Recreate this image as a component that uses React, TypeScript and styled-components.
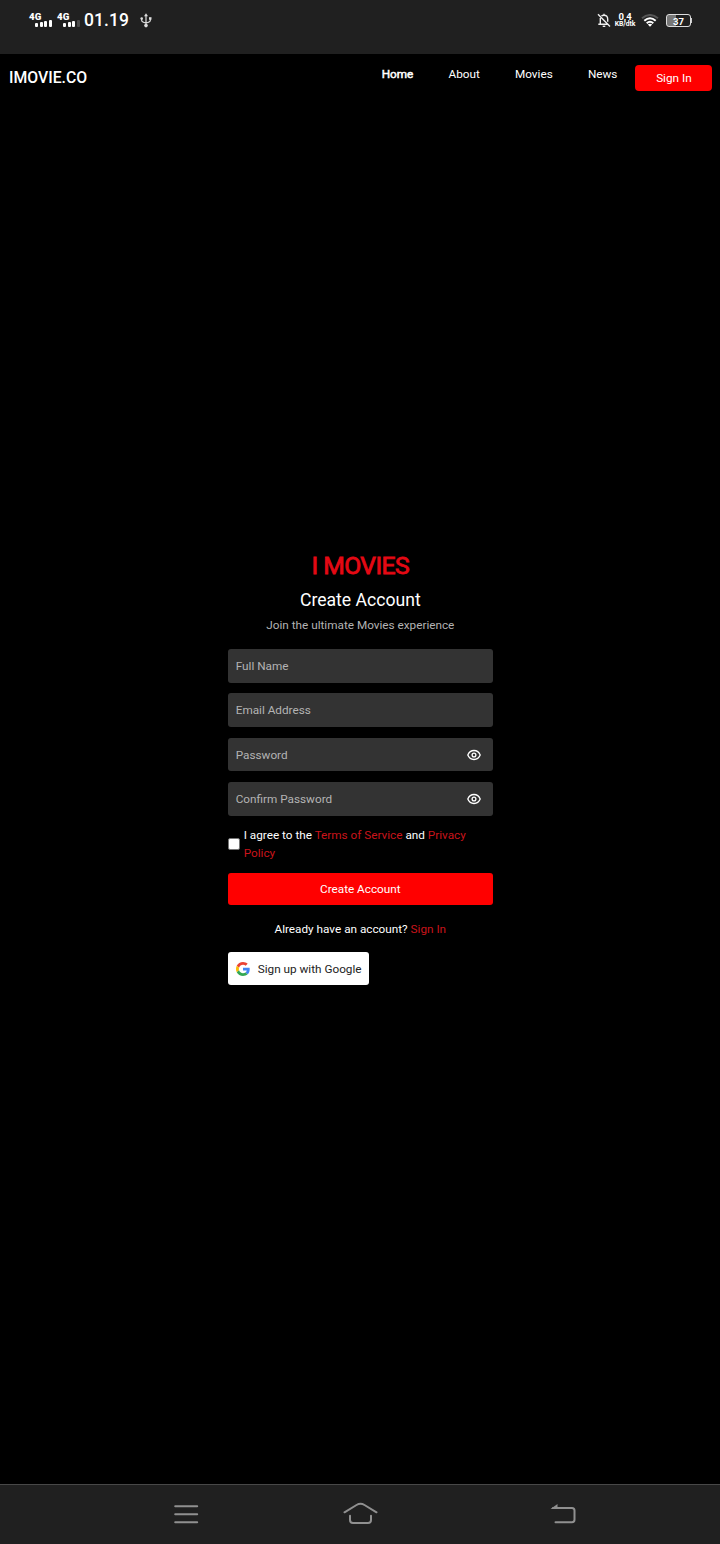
import React from 'react';
import styled, { createGlobalStyle } from 'styled-components';

const Global = createGlobalStyle`
  * { box-sizing: border-box; }
  html, body { margin: 0; background: #000; }
  body, input, button { font-family: Roboto, "Liberation Sans", sans-serif; }
`;

const Screen = styled.div`
  width: 720px;
  height: 1544px;
  display: flex;
  flex-direction: column;
  background: #000;
  color: #fff;
  font-size: 11.75px;
  overflow: hidden;
`;

const StatusBar = styled.header`
  height: 54px;
  flex: none;
  background: #202020;
  display: flex;
  justify-content: space-between;
  align-items: flex-start;
  padding: 10px 28px 0 28px;
`;

const StatusGroup = styled.div`
  display: flex;
  align-items: center;
  height: 20px;
`;

const Signal = styled.div`
  width: 28px;
  height: 16px;
  display: flex;
  flex-direction: column;
`;

const SignalLabel = styled.span`
  font-size: 9.7px;
  line-height: 9px;
  font-weight: 900;
  letter-spacing: 0.2px;
  padding-left: 1px;
`;

const Bars = styled.div`
  display: flex;
  align-items: flex-end;
  gap: 1.5px;
  height: 8px;
  margin-top: -2.5px;
  padding-left: 7px;
`;

const Bar = styled.i<{ $h: number; $dim?: boolean }>`
  width: 3px;
  height: ${(p) => p.$h}px;
  border-radius: 1px;
  background: ${(p) => (p.$dim ? '#4a4a4a' : '#fff')};
`;

const Clock = styled.span`
  font-size: 17.5px;
  line-height: 20px;
  font-weight: 500;
  letter-spacing: 0.1px;
  width: 56px;
`;

const Speed = styled.div`
  width: 22px;
  margin: 0 5px 0 3px;
  display: flex;
  flex-direction: column;
  align-items: center;
  font-weight: 700;
`;

const SpeedValue = styled.span`
  font-size: 9.5px;
  line-height: 8px;
`;

const SpeedUnit = styled.span`
  font-size: 6.8px;
  line-height: 6px;
  letter-spacing: -0.1px;
  white-space: nowrap;
`;

const Battery = styled.div`
  width: 25px;
  height: 13px;
  margin-left: 7px;
  border: 1px solid #ddd;
  border-radius: 3px;
  background: linear-gradient(90deg, #777 0 38%, #202020 38%);
  font-size: 9.5px;
  line-height: 14px;
  font-weight: 700;
  text-align: center;
`;

const BatteryTip = styled.i`
  width: 1px;
  height: 5px;
  background: #ccc;
`;

const NavBar = styled.nav`
  height: 48px;
  flex: none;
  display: flex;
  align-items: flex-start;
  padding: 11.3px 7.6px 0 9px;
`;

const Brand = styled.div`
  font-size: 15.8px;
  line-height: 25px;
  font-weight: 500;
  margin-right: auto;
`;

const NavLinks = styled.div`
  display: flex;
  gap: 35.2px;
  margin-right: 18px;
  line-height: 18px;
`;

const NavLink = styled.a<{ $active?: boolean }>`
  -webkit-text-stroke: ${(p) => (p.$active ? '0.5px #fff' : '0')};
`;

const SignInButton = styled.button`
  width: 77px;
  height: 26px;
  padding: 0;
  border: 0;
  border-radius: 4px;
  background: #f00;
  color: #fff;
  font-size: 11.75px;
`;

const Main = styled.main`
  flex: 1;
  display: flex;
  flex-direction: column;
  align-items: center;
  padding: 449px 0 0 0.6px;
`;

const Form = styled.form`
  width: 265.2px;
  display: flex;
  flex-direction: column;
`;

const Logo = styled.h1`
  margin: 0;
  font-size: 24.7px;
  line-height: 30px;
  font-weight: 400;
  letter-spacing: -0.6px;
  text-align: center;
  color: #e50914;
  -webkit-text-stroke: 0.8px #e50914;
`;

const Title = styled.h2`
  margin: 7px 0 0;
  font-size: 17.6px;
  line-height: 24px;
  font-weight: 400;
  text-align: center;
`;

const Subtitle = styled.p`
  margin: 4px 0 15px;
  line-height: 18px;
  text-align: center;
  color: #b3b3b3;
`;

const Field = styled.label`
  height: 33.5px;
  margin-bottom: 10.9px;
  padding: 0 12px 0 8px;
  display: flex;
  align-items: center;
  border-radius: 3px;
  background: #333;
`;

const Input = styled.input`
  flex: 1;
  min-width: 0;
  padding: 0;
  border: 0;
  outline: 0;
  background: transparent;
  color: #fff;
  font-size: 11.75px;
  &::placeholder { color: #b3b3b3; opacity: 1; }
`;

const Agreement = styled.label`
  display: flex;
  align-items: center;
  line-height: 18px;
  margin: -0.7px 0 11.2px;
`;

const Checkbox = styled.input`
  appearance: none;
  flex: none;
  width: 12px;
  height: 12px;
  margin: 0 4px 0 0;
  border: 1px solid #767676;
  border-radius: 2px;
  background: #fff;
`;

const RedLink = styled.a`
  color: #c9141b;
`;

const Submit = styled.button`
  height: 32.3px;
  padding: 0;
  border: 0;
  border-radius: 3px;
  background: #f00;
  color: #fff;
  font-size: 11.75px;
`;

const Already = styled.p`
  margin: 14.2px 0 14.8px;
  line-height: 18px;
  text-align: center;
`;

const GoogleButton = styled.button`
  align-self: flex-start;
  width: 141px;
  height: 32.5px;
  padding: 0 0 0 8px;
  display: flex;
  align-items: center;
  gap: 8px;
  border: 0;
  border-radius: 3px;
  background: #fff;
  color: #222;
  font-size: 11.75px;
  white-space: nowrap;
`;

const SystemNav = styled.footer`
  height: 60px;
  flex: none;
  border-top: 1px solid #484848;
  background: #202020;
  display: grid;
  grid-template-columns: 169px 208px 26px;
  align-items: center;
  padding: 0 0 2px 173px;
`;

const EyeIcon = () => (
  <svg width="14" height="12" viewBox="0 0 14 12" fill="none" stroke="#fff" strokeWidth="1.3">
    <path d="M.8 6C2 3 4.2 1.5 7 1.5S12 3 13.2 6C12 9 9.800 10.500 7 10.500S2 9 .8 6Z" />
    <circle cx="7" cy="6" r="1.900" />
  </svg>
);

const UsbIcon = () => (
  <svg width="12" height="15" viewBox="0 0 12 15" fill="none" stroke="#ddd" strokeWidth="1.2">
    <path d="M6 2v10M1.700 5.500v2Q1.700 9 6 10M10.300 5.500v2Q10.300 9 6 10" />
    <path d="M6 .3 8 3.300H4Z" fill="#ddd" stroke="none" />
    <circle cx="1.700" cy="5.500" r="1.300" fill="#ddd" stroke="none" />
    <path d="M9 4.200h2.500v2.500H9Z" fill="#ddd" stroke="none" />
    <circle cx="6" cy="12.600" r="1.800" fill="#ddd" stroke="none" />
  </svg>
);

const BellOffIcon = () => (
  <svg width="14" height="15" viewBox="0 0 14 15" fill="none" stroke="#eee" strokeWidth="1.400">
    <path d="M4.500 3.100C5 2.600 6 2.300 7 2.300c2.200 0 3.700 1.700 3.700 4v2.500M3.300 5v5.800M1.300 11.200h9M7 2.300V.7M1 1.200l12 12.300" />
    <path d="M5.700 13.300h2.600" />
  </svg>
);

const WifiIcon = () => (
  <svg width="18" height="13" viewBox="0 0 18 13" fill="none" strokeWidth="2">
    <path d="M1 4.300Q9-2.300 17 4.300" stroke="#555" />
    <path d="M3.300 6.700Q9 1.700 14.700 6.700M5.700 9.200Q9 6.200 12.300 9.200" stroke="#fff" />
    <path d="M6.800 10.400Q9 8.900 11.200 10.400L9 12.800Z" fill="#fff" />
  </svg>
);

const GoogleIcon = () => (
  <svg width="14" height="14" viewBox="0 0 48 48">
    <path fill="#EA4335" d="M24 9.500c3.540 0 6.710 1.220 9.210 3.600l6.850-6.850C35.900 2.380 30.470 0 24 0 14.620 0 6.510 5.380 2.560 13.220l7.980 6.190C12.430 13.720 17.740 9.500 24 9.500z" />
    <path fill="#4285F4" d="M46.980 24.550c0-1.570-.15-3.090-.38-4.550H24v9.020h12.940c-.58 2.960-2.260 5.480-4.780 7.180l7.730 6c4.510-4.180 7.090-10.360 7.090-17.650z" />
    <path fill="#FBBC05" d="M10.530 28.590A14.500 14.500 0 0 1 9.770 24c0-1.600.27-3.140.76-4.590l-7.980-6.190A23.900 23.900 0 0 0 0 24c0 3.870.92 7.540 2.560 10.780l7.970-6.190z" />
    <path fill="#34A853" d="M24 48c6.480 0 11.930-2.130 15.890-5.810l-7.730-6c-2.150 1.450-4.920 2.300-8.160 2.300-6.260 0-11.570-4.220-13.470-9.910l-7.980 6.190C6.510 42.620 14.620 48 24 48z" />
  </svg>
);

const RecentsIcon = () => (
  <svg width="26" height="22" viewBox="0 0 26 22" stroke="#909090" strokeWidth="2" strokeLinecap="round">
    <path d="M2.200 3.300h22M2.200 11.300h22M2.200 19.300h22" />
  </svg>
);

const HomeIcon = () => (
  <svg width="36" height="24" viewBox="0 0 36 24" fill="none" stroke="#909090" strokeWidth="2" strokeLinecap="round">
    <path d="M2.500 10.300 14.500 3Q18.500 .7 22.500 3L34.500 10.300M8 13.800V18Q8 21 11 21H26Q29 21 29 18V13.800" />
  </svg>
);

const BackIcon = () => (
  <svg width="26" height="22" viewBox="0 0 26 22" fill="none" stroke="#909090" strokeWidth="2">
    <path d="M3 5H22Q24.500 5 24.500 7.500V16.500Q24.500 19.300 22 19.300H5.500" strokeLinecap="round" />
    <path d="M.5 6 7.500 1V6Z" fill="#909090" stroke="none" />
  </svg>
);

const bars = [4, 4.5, 5.5, 7];

const CellSignal = ({ weak }: { weak?: boolean }) => (
  <Signal>
    <SignalLabel>4G</SignalLabel>
    <Bars>
      {bars.map((h, i) => (
        <Bar key={h} $h={h} $dim={weak && i === 3} />
      ))}
    </Bars>
  </Signal>
);

const fields = [
  { label: 'Full Name', type: 'text' },
  { label: 'Email Address', type: 'email' },
  { label: 'Password', type: 'password' },
  { label: 'Confirm Password', type: 'password' },
];

export default function App() {
  return (
    <>
      <Global />
      <Screen>
        <StatusBar>
          <StatusGroup>
            <CellSignal />
            <CellSignal weak />
            <Clock>01.19</Clock>
            <UsbIcon />
          </StatusGroup>
          <StatusGroup>
            <BellOffIcon />
            <Speed>
              <SpeedValue>0,4</SpeedValue>
              <SpeedUnit>KB/dtk</SpeedUnit>
            </Speed>
            <WifiIcon />
            <Battery>37</Battery>
            <BatteryTip />
          </StatusGroup>
        </StatusBar>
        <NavBar>
          <Brand>IMOVIE.CO</Brand>
          <NavLinks>
            <NavLink $active>Home</NavLink>
            <NavLink>About</NavLink>
            <NavLink>Movies</NavLink>
            <NavLink>News</NavLink>
          </NavLinks>
          <SignInButton>Sign In</SignInButton>
        </NavBar>
        <Main>
          <Form>
            <Logo>I MOVIES</Logo>
            <Title>Create Account</Title>
            <Subtitle>Join the ultimate Movies experience</Subtitle>
            {fields.map((f) => (
              <Field key={f.label}>
                <Input type={f.type} placeholder={f.label} />
                {f.type === 'password' && <EyeIcon />}
              </Field>
            ))}
            <Agreement>
              <Checkbox type="checkbox" />
              <span>
                I agree to the <RedLink>Terms of Service</RedLink> and <RedLink>Privacy Policy</RedLink>
              </span>
            </Agreement>
            <Submit type="button">Create Account</Submit>
            <Already>
              Already have an account? <RedLink>Sign In</RedLink>
            </Already>
            <GoogleButton type="button">
              <GoogleIcon />
              Sign up with Google
            </GoogleButton>
          </Form>
        </Main>
        <SystemNav>
          <RecentsIcon />
          <HomeIcon />
          <BackIcon />
        </SystemNav>
      </Screen>
    </>
  );
}
